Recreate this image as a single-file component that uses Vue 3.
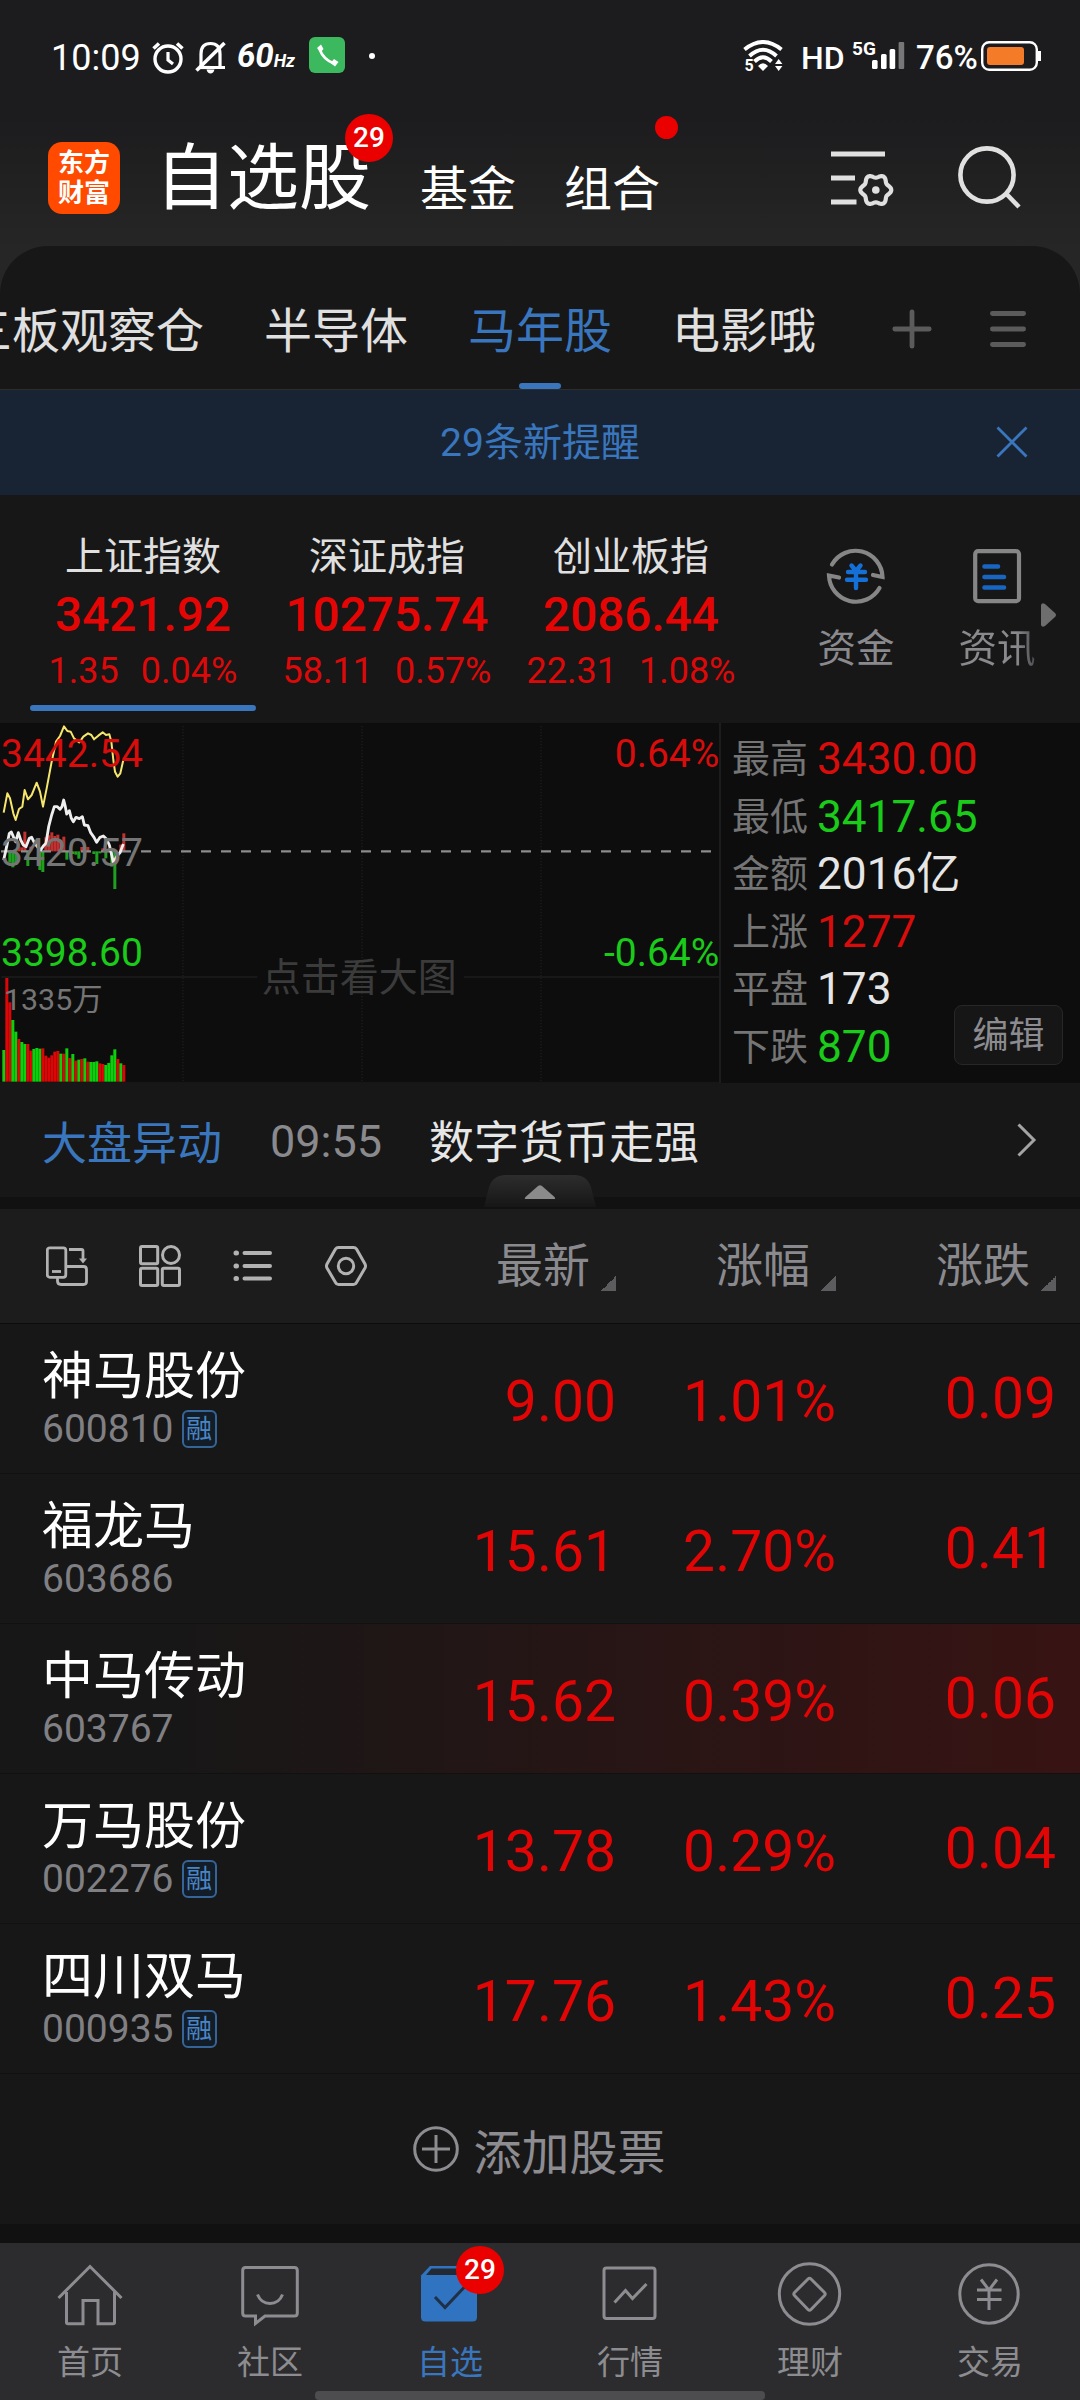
<script setup>
const tabs = ['三板观察仓', '半导体', '马年股', '电影哦']
const indices = [
  { name: '上证指数', price: '3421.92', diff: '1.35', pct: '0.04%', active: true },
  { name: '深证成指', price: '10275.74', diff: '58.11', pct: '0.57%' },
  { name: '创业板指', price: '2086.44', diff: '22.31', pct: '1.08%' },
]
const stats = [
  { label: '最高', value: '3430.00', tone: 'up' },
  { label: '最低', value: '3417.65', tone: 'down' },
  { label: '金额', value: '2016亿', tone: 'flat' },
  { label: '上涨', value: '1277', tone: 'up' },
  { label: '平盘', value: '173', tone: 'flat' },
  { label: '下跌', value: '870', tone: 'down' },
]
const columns = ['最新', '涨幅', '涨跌']
const stocks = [
  { name: '神马股份', code: '600810', margin: true, last: '9.00', pct: '1.01%', diff: '0.09' },
  { name: '福龙马', code: '603686', margin: false, last: '15.61', pct: '2.70%', diff: '0.41' },
  { name: '中马传动', code: '603767', margin: false, last: '15.62', pct: '0.39%', diff: '0.06', flash: true },
  { name: '万马股份', code: '002276', margin: true, last: '13.78', pct: '0.29%', diff: '0.04' },
  { name: '四川双马', code: '000935', margin: true, last: '17.76', pct: '1.43%', diff: '0.25' },
]

// Volume bars: colour flag and top edge, in chart units
const volume = [
  ['g', 1020], ['r', 804], ['r', 877], ['g', 930], ['g', 965], ['r', 987], ['g', 996], ['g', 1002],
  ['r', 1002], ['r', 1022], ['g', 1017], ['g', 1014], ['g', 1016], ['r', 1015], ['r', 1037], ['r', 1043],
  ['r', 1036], ['r', 1025], ['r', 1023], ['g', 1031], ['r', 1031], ['g', 1015], ['r', 1044], ['g', 1032],
  ['r', 1052], ['g', 1049], ['r', 1047], ['g', 1045], ['r', 1055], ['g', 1056], ['g', 1056], ['g', 1054],
  ['r', 1060], ['r', 1062], ['g', 1065], ['g', 1059], ['g', 1036], ['g', 1018], ['r', 1047], ['g', 1060], ['r', 1065],
]
// Momentum bars around the previous close: slot and far edge
const momentum = [
  [2, 458], [3, 472], [4, 465], [5, 410], [6, 412], [7, 365], [8, 468], [9, 410], [12, 480], [13, 486],
  [14, 382], [15, 376], [16, 367], [17, 378], [18, 374], [19, 392], [20, 380], [21, 449], [23, 432], [24, 434], [25, 446],
  [26, 411], [27, 411], [28, 411], [30, 432], [31, 462], [32, 430], [33, 415], [34, 445], [36, 470], [37, 537],
  [39, 404], [40, 370],
]
const avgLine = '11,308 22,250 30,265 40,310 47,330 57,297 67,290 74,240 84,268 95,255 110,218 120,245 129,290 140,235 155,155 168,95 180,78 192,49 202,63 212,65 222,85 238,97 250,80 264,70 274,75 282,88 295,77 308,67 318,75 328,73 334,95 340,150 345,185 353,200 361,190 370,150'
const priceLine = '11,450 20,410 28,370 34,366 40,380 47,395 55,368 62,390 70,405 78,410 88,385 95,382 103,398 112,410 122,420 130,408 138,400 146,350 155,315 163,290 172,290 180,298 186,290 191,270 196,290 200,312 208,302 214,325 220,335 228,322 238,326 247,320 253,345 264,347 272,368 282,382 290,397 300,382 310,378 320,388 328,405 334,430 340,458 350,440 360,428 370,402'

const gear = Array.from({ length: 72 }, (_, i) => {
  const a = (i * Math.PI) / 36
  const r = 13.9 + 1.6 * Math.cos(6 * a)
  return `${(47.8 + r * Math.cos(a)).toFixed(2)},${(41 + r * Math.sin(a)).toFixed(2)}`
}).join(' ')
</script>

<template>
  <div class="app">
    <div class="status">
      <span class="time">10:09</span>
      <svg class="alarm" width="32" height="32" viewBox="0 0 32 32" fill="none" stroke="#fff">
        <circle cx="16" cy="17" r="13" stroke-width="3.4" />
        <path d="M16 10v8l5 4" stroke-width="3.2" />
        <path d="M1.5 6.500L7 1.500M25 1.500L30.500 6.500" stroke-width="3.600" />
      </svg>
      <svg class="bell" width="32" height="34" viewBox="0 0 32 34" fill="none" stroke="#fff" stroke-width="3.2">
        <path d="M6 25V13Q6 2.500 15.500 2.500Q25 2.500 25 13V26.500M14 26.500H30" />
        <path d="M1.500 29.500L29.500 2" stroke-width="3.600" />
        <path d="M5 26.500H15" />
        <path d="M11.500 28.500h8q-1 4-4 4t-4-4z" fill="#fff" stroke="none" />
      </svg>
      <span class="hz">60<small>Hz</small></span>
      <svg class="phone" width="36" height="36" viewBox="0 0 36 36">
        <rect width="36" height="36" rx="6" fill="#3cb95f" />
        <path d="M10.500 12C13 19 17 23.500 25 26.500" fill="none" stroke="#fff" stroke-width="2.600" />
        <path d="M8 11l4-3.500 2.500 4.500-3 3.500zM21.500 26l3.500-4 4.500 3-3.500 4.500z" fill="#fff" />
      </svg>
      <i class="pip"></i>

      <svg class="wifi" width="40" height="32" viewBox="0 0 40 32" fill="none" stroke="#fff" stroke-width="3.900">
        <path d="M1.500 9.500Q20 -5.500 38.500 9.500" />
        <path d="M6.500 16Q20 3.500 33.500 16" />
        <path d="M11.500 21.500Q20 13 28.500 21.500" />
        <path d="M15 26Q20 20.500 25 26L20 31z" fill="#fff" stroke="none" />
        <path d="M32 24l3.700-5 3.700 5zM32 26l3.700 5 3.700-5z" fill="#fff" stroke="none" />
        <text x="1.500" y="31" font-size="16" font-weight="700" fill="#fff" stroke="none">5</text>
      </svg>
      <span class="hd">HD</span>
      <span class="gen">5G</span>
      <svg class="signal" width="33" height="28" viewBox="0 0 33 28" fill="#fff">
        <rect x="0" y="18" width="5.600" height="9" rx="1.500" />
        <rect x="9" y="12" width="5.600" height="15" rx="1.500" />
        <rect x="17.600" y="7" width="5.600" height="20" rx="1.500" />
        <rect x="26.600" y="0" width="5.600" height="27" rx="1" fill="#777" />
      </svg>
      <span class="charge">76%</span>
      <svg class="battery" width="60" height="30" viewBox="0 0 60 30">
        <rect x="1.200" y="1.200" width="54.600" height="27.600" rx="7" fill="none" stroke="#fff" stroke-width="2.400" />
        <rect x="6" y="6" width="37" height="18" rx="3" fill="#f47b28" />
        <rect x="57" y="10" width="3" height="10" fill="#fff" />
      </svg>
    </div>

    <header class="head">
      <div class="logo"><span>东方</span><span>财富</span></div>
      <div class="title">自选股<b class="badge">29</b></div>
      <div class="sub">基金</div>
      <div class="sub">组合<i class="reddot"></i></div>
      <div class="head-icons">
        <svg width="68" height="64" viewBox="0 0 68 64" fill="none" stroke="#e0e0e0">
          <path d="M3 5H57M3 29H27M3 53H28.500" stroke-width="5" />
          <polygon :points="gear" stroke-width="4.200" stroke-linejoin="round" />
          <circle cx="47.800" cy="41" r="3.800" fill="#e0e0e0" stroke="none" />
        </svg>
        <svg width="66" height="66" viewBox="0 0 66 66" fill="none" stroke="#e0e0e0" stroke-width="4.600">
          <circle cx="31" cy="30" r="26.600" />
          <path d="M50 48.500L63 62" />
        </svg>
      </div>
    </header>

    <main class="panel">
      <nav class="tabs">
        <div class="tab-clip">
          <span v-for="(t, i) in tabs" :key="t" class="tab" :class="{ on: i === 2 }">{{ t }}</span>
        </div>
        <svg class="plus" width="40" height="40" viewBox="0 0 40 40" stroke="#5b5b5b" stroke-width="4.800" stroke-linecap="round">
          <path d="M20 2.800V37.200M2.800 20H37.200" />
        </svg>
        <svg class="burger" width="36" height="40" viewBox="0 0 36 40" stroke="#5b5b5b" stroke-width="4.800" stroke-linecap="round">
          <path d="M2.400 4.500H33.600M2.400 20H33.600M2.400 35.500H33.600" />
        </svg>
      </nav>

      <div class="notice">
        <span>29条新提醒</span>
        <svg width="32" height="32" viewBox="0 0 32 32" stroke="#3a76bd" stroke-width="2.800">
          <path d="M1.500 1.500L30.500 30.500M30.500 1.500L1.500 30.500" />
        </svg>
      </div>

      <section class="indices">
        <div v-for="x in indices" :key="x.name" class="index" :class="{ on: x.active }">
          <div class="iname">{{ x.name }}</div>
          <div class="iprice">{{ x.price }}</div>
          <div class="idelta"><span>{{ x.diff }}</span><span>{{ x.pct }}</span></div>
        </div>
        <div class="tool">
          <svg width="60" height="62" viewBox="0 0 60 62" fill="none" stroke="#868686" stroke-width="4.200" stroke-linecap="round">
            <path d="M6 19.500A27 27 0 0 1 56.500 32L47 30" />
            <path d="M53.500 43A27 27 0 0 1 3 30.500L13 32.500" />
            <path d="M25.500 20.500L30 26L34.500 20.500M22 27H39M21 34.800H40M30 26V43" stroke="#146fd6" stroke-width="4.400" />
          </svg>
          <span>资金</span>
        </div>
        <div class="tool last">
          <svg width="60" height="62" viewBox="0 0 60 62" fill="none" stroke="#868686" stroke-width="4.200" stroke-linecap="round">
            <rect x="8.200" y="6.200" width="43.800" height="50" rx="3" />
            <path d="M17.500 21.500H31M17.500 32H37M17.500 42.500H37" stroke="#1766c4" stroke-width="4.600" />
          </svg>
          <span class="fade">资讯</span>
        </div>
        <svg class="more" width="15" height="24" viewBox="0 0 15 24"><path d="M0 2Q1 -1 4 1L14 10Q16 12 14 14L4 23Q1 25 0 22z" fill="#6e6e6e" /></svg>
      </section>

      <section class="market">
        <svg class="chart" width="719" height="360" viewBox="0 39 2157 1080">
          <g stroke="#1c1c1c" stroke-width="4">
            <path d="M549 48V1113M1086 48V1113M1623 48V1113" stroke="#1a1a1a" stroke-width="5" stroke-dasharray="4 5" />
            <path d="M4 801H772M1392 801H2157" stroke-width="5" />
            <path d="M0 1117H2157" stroke="#161616" />
          </g>
          <g>
            <rect v-for="m in momentum" :key="m[0]" :x="7 + m[0] * 9" width="9" :y="Math.min(m[1], 424)" :height="Math.abs(m[1] - 424)" :fill="m[1] > 424 ? '#20a020' : '#c23030'" />
          </g>
          <path d="M3 424H2142" stroke="#8c8c8c" stroke-width="7" stroke-dasharray="30 30" />
          <polyline :points="avgLine" fill="none" stroke="#f6e66c" stroke-width="6" stroke-linejoin="round" />
          <polyline :points="priceLine" fill="none" stroke="#eee" stroke-width="8.500" stroke-linejoin="round" />
          <g>
            <rect v-for="(v, i) in volume" :key="i" :x="7 + i * 9" width="9" :y="v[1]" :height="1115 - v[1]" :fill="v[0] === 'r' ? '#dc0606' : '#0cd00c'" />
          </g>
          <g font-size="117">
            <text x="3" y="171" fill="#d90c0c">3442.54</text>
            <text x="3" y="468" fill="#757575">3420.57</text>
            <text x="3" y="769" fill="#1acb1a">3398.60</text>
            <text x="2158" y="171" fill="#d90c0c" text-anchor="end">0.64%</text>
            <text x="2158" y="769" fill="#1acb1a" text-anchor="end">-0.64%</text>
            <text x="12" y="900" fill="#757575" font-size="91">1335万</text>
            <text x="1078" y="842" fill="#3b3b3b" text-anchor="middle">点击看大图</text>
          </g>
        </svg>
        <div class="stats">
          <div v-for="s in stats" :key="s.label" class="stat">
            <span class="slabel">{{ s.label }}</span><span class="sval" :class="s.tone">{{ s.value }}</span>
          </div>
          <button class="edit">编辑</button>
        </div>
      </section>

      <section class="news">
        <span class="ntag">大盘异动</span><span class="ntime">09:55</span><span class="ntext">数字货币走强</span>
        <svg class="chev" width="20" height="34" viewBox="0 0 20 34" fill="none" stroke="#a4a4a4" stroke-width="3"><path d="M1.500 1.500L17 17L1.500 32.500" /></svg>
        <svg class="handle" width="112" height="32" viewBox="0 0 112 32">
          <defs><linearGradient id="hg" x1="0" y1="0" x2="0" y2="1"><stop offset="0" stop-color="#2d2d2d" /><stop offset="1" stop-color="#161616" /></linearGradient></defs>
          <path d="M0 32L4 16Q7 0 22 0H90Q105 0 108 16L112 32z" fill="url(#hg)" />
          <path d="M41.500 24Q40 24 41.500 22L54 11Q56 9.500 58 11L70.500 22Q72 24 70 24z" fill="#8b8b8b" />
        </svg>
      </section>

      <div class="gap1"></div>

      <section class="thead">
        <div class="views">
          <svg width="42" height="42" viewBox="0 0 42 42" fill="none" stroke="#b2b2b2" stroke-width="2.800" stroke-linejoin="round">
            <rect x="1.300" y="2.800" width="18.500" height="29.500" rx="2.500" /><path d="M6 26.500H15" />
            <path d="M11.500 33V36Q11.500 39.500 15 39.500H37.500Q40.500 39.500 40.500 36.500V24.500Q40.500 21.500 37.500 21.500H20" />
            <path d="M23 4.500H35.500Q37 4.500 37 6V14" /><path d="M33 13.500H41L37 18.500z" fill="#b2b2b2" stroke="none" />
          </svg>
          <svg width="42" height="42" viewBox="0 0 42 42" fill="none" stroke="#b2b2b2" stroke-width="3">
            <rect x="1.500" y="1.500" width="17.200" height="17.200" rx="1.500" /><circle cx="32" cy="10" r="8.500" />
            <rect x="1.500" y="23.300" width="17.200" height="17.200" rx="1.500" /><rect x="23.300" y="23.300" width="17.200" height="17.200" rx="1.500" />
          </svg>
          <svg width="42" height="42" viewBox="0 0 42 42" fill="none" stroke="#b2b2b2" stroke-width="4" stroke-linecap="round">
            <path d="M12.500 8H38M12.500 21H38M12.500 33.500H38" />
            <path d="M4 8h.5M4 21h.5M4 33.500h.5" stroke-width="5" />
          </svg>
          <svg width="42" height="42" viewBox="0 0 42 42" fill="none" stroke="#b2b2b2" stroke-width="3" stroke-linejoin="round">
            <path d="M13.500 2.500H28.500Q30.500 2.500 31.500 4L40 19Q41 21 40 23L31.500 37.500Q30.500 39.500 28.500 39.500H13.500Q11.500 39.500 10.500 37.500L2 23Q1 21 2 19L10.500 4Q11.500 2.500 13.500 2.500z" />
            <circle cx="21" cy="21" r="7.700" />
          </svg>
        </div>
        <div v-for="c in columns" :key="c" class="th">{{ c }}<i></i></div>
      </section>

      <section>
        <div v-for="s in stocks" :key="s.code" class="row" :class="{ flash: s.flash }">
          <div class="who">
            <div class="sname">{{ s.name }}</div>
            <div class="scode">{{ s.code }}<em v-if="s.margin">融</em></div>
          </div>
          <div class="num">{{ s.last }}</div>
          <div class="num">{{ s.pct }}</div>
          <div class="num diff">{{ s.diff }}</div>
        </div>
      </section>

      <div class="add">
        <svg width="46" height="46" viewBox="0 0 46 46" fill="none" stroke="#8c8c91" stroke-width="3"><circle cx="23" cy="23" r="21.300" /><path d="M9 23H37M23 9V37" /></svg>
        <span>添加股票</span>
      </div>
      <div class="gap2"></div>
    </main>

    <footer class="nav">
      <div class="item">
        <svg width="66" height="66" viewBox="0 0 66 66"><path d="M1.500 37L33 5.500L64.500 37M9.500 31V61.500Q9.500 62.700 11 62.700H26V39.500H41V62.700H56Q57.500 62.700 57.500 61.500V31" /></svg>
        <span>首页</span>
      </div>
      <div class="item">
        <svg width="66" height="66" viewBox="0 0 66 66"><path d="M8.500 6.500H57.500Q60.300 6.500 60.300 9.500V52Q60.300 55 57.500 55H28L18.500 62.500V55H8.500Q5.700 55 5.700 52V9.500Q5.700 6.500 8.500 6.500z" /><path d="M20.500 33.500Q24 42.500 33 42.500Q42 42.500 45.500 33.500" /></svg>
        <span>社区</span>
      </div>
      <div class="item on">
        <svg width="66" height="66" viewBox="0 0 66 66">
          <path d="M4 14.500L13 5H52L60 14.500V56Q60 60.500 55.500 60.500H8.500Q4 60.500 4 56z" fill="#3073c0" stroke="none" />
          <path d="M9 14L14.500 7.500H51L56.500 14z" fill="#232a33" stroke="none" />
          <path d="M18 36L28 46.500L47.500 26" stroke="#1f3048" stroke-width="3" />
        </svg>
        <span>自选</span>
        <b class="badge">29</b>
      </div>
      <div class="item">
        <svg width="66" height="66" viewBox="0 0 66 66"><rect x="7" y="7" width="51" height="50.500" rx="2.500" /><path d="M17.500 41.500L28.500 29.500L35.500 37.500L49.500 23" /></svg>
        <span>行情</span>
      </div>
      <div class="item">
        <svg width="66" height="66" viewBox="0 0 66 66"><circle cx="32.500" cy="33" r="30.200" /><path d="M31 18Q32.500 16.500 34 18L47.500 31.500Q49 33 47.500 34.500L34 48.500Q32.500 50 31 48.500L17.500 34.500Q16 33 17.500 31.500z" /></svg>
        <span>理财</span>
      </div>
      <div class="item">
        <svg width="66" height="66" viewBox="0 0 66 66"><circle cx="32" cy="33" r="29.200" /><path d="M24 18.500L32 29L40 18.500M20 29H44.500M20 38.500H44.500M32 29V49" /></svg>
        <span>交易</span>
      </div>
      <i class="homebar"></i>
    </footer>
  </div>
</template>

<style>
body { background: #171717; }
</style>

<style scoped>
.app {
  width: 1080px;
  height: 2400px;
  overflow: hidden;
  font-family: Roboto, "Noto Sans CJK SC", sans-serif;
  color: #e0e0e0;
  background: linear-gradient(#1c1c1e 115px, #262626 250px);
}
.app * { box-sizing: border-box; }
svg { display: block; flex: none; }
svg text { font-family: Roboto, "Noto Sans CJK SC", sans-serif; }
i, em { font-style: normal; }

.status { display: flex; height: 115px; align-items: center; padding: 0 39px 0 51px; color: #fff; line-height: 40px; white-space: nowrap; }
.time { width: 101px; font-size: 36px; }
.bell { margin-left: 11px; }
.hz { width: 56px; margin: 2px 0 0 10px; font-size: 33px; font-weight: 700; font-style: italic; }
.hz small { font-size: 18px; }
.phone { margin: -5px 0 0 16px; }
.pip { width: 6px; height: 6px; margin: -4px 0 0 24px; border-radius: 50%; background: #fff; }
.wifi { margin: -3px 18px 0 auto; }
.hd { width: 51px; font-size: 32px; font-weight: 500; }
.gen { width: 20px; margin-top: -17px; font-size: 19px; font-weight: 700; }
.signal { margin-top: -3px; }
.charge { width: 65px; margin-left: 11px; font-size: 33px; font-weight: 500; }
.battery { margin: -4px 0 0 0; }

.head { display: flex; height: 131px; align-items: flex-start; padding: 0 58px 0 48px; color: #fff; }
.logo { display: flex; flex-direction: column; width: 72px; height: 72px; margin-top: 27px; padding-top: 6px; border-radius: 14px; background: #ff4a00; align-items: center; font-size: 26px; font-weight: 700; line-height: 30px; }
.title { position: relative; margin: 28px 0 0 35px; font-size: 72px; line-height: 72px; }
.sub { position: relative; margin: 51px 0 0 48px; font-size: 48px; line-height: 48px; }
.title + .sub { margin-left: 49px; }
.badge { position: absolute; width: 48px; height: 48px; border-radius: 50%; background: #eb0000; color: #fff; font-size: 28px; font-weight: 500; line-height: 48px; text-align: center; }
.title .badge { left: 190px; top: -29px; }
.reddot { position: absolute; left: 91px; top: -50px; width: 23px; height: 23px; border-radius: 50%; background: #eb0000; }
.head-icons { display: flex; gap: 60px; margin: 34px 0 0 auto; }
.head-icons svg:last-child { margin-top: -4px; }

.panel { border-radius: 48px 48px 0 0; background: #171717; overflow: hidden; }
.tabs { display: flex; height: 144px; border-bottom: 1px solid #2b2d2e; }
.tab-clip { display: flex; width: 851px; gap: 60px; margin-left: -36px; font-size: 48px; line-height: 48px; padding-top: 62px; white-space: nowrap; }
.tab { display: flex; flex: none; flex-direction: column; align-items: center; }
.tab.on { color: #3a76bd; }
.tab.on::after { content: ""; width: 42px; height: 6px; margin-top: 27px; border-radius: 3px; background: #3a76bd; }
.plus { margin: 63px 0 0 77px; }
.burger { margin: 63px 0 0 58px; }

.notice { display: flex; height: 105px; align-items: center; padding-right: 52px; background: #182433; color: #3a76bd; font-size: 39px; line-height: 104px; }
.notice span { flex: 1; padding: 1px 0 0 84px; text-align: center; }
.notice svg { margin-top: -1px; }

.indices { display: flex; height: 228px; padding-left: 21px; }
.index { display: flex; flex-direction: column; align-items: center; width: 244px; height: 222px; }
.index.on::after { content: ""; width: 226px; height: 6px; margin-top: 14px; border-radius: 3px; background: #3a76bd; }
.iname { margin-top: 42px; font-size: 39px; line-height: 40px; }
.iprice { margin-top: 14px; font-size: 47.700px; font-weight: 500; line-height: 48px; color: #e60505; }
.idelta { display: flex; gap: 22px; margin-top: 12px; font-size: 36px; line-height: 40px; color: #db0909; }
.tool { display: flex; flex-direction: column; align-items: center; width: 100px; margin: 50px 0 0 53px; font-size: 38.500px; line-height: 40px; color: #8a8a8e; }
.tool.last { margin-left: 41px; }
.tool span { margin-top: 22px; }
.fade { background: linear-gradient(90deg, #8a8a8e 75%, #4b4b4f); background-clip: text; color: transparent; }
.more { margin: 108px 0 0 -6px; }

.market { display: flex; height: 360px; background: #0d0d0d; }
.stats { position: relative; width: 361px; padding: 8px 0 0 11px; border-left: 2px solid #1c1c1c; }
.stat { display: flex; height: 57.500px; align-items: center; line-height: 57px; }
.slabel { width: 85px; font-size: 38px; color: #757575; }
.sval { font-size: 44.200px; }
.up { color: #d90c0c; }
.down { color: #1acb1a; }
.flat { color: #e6e6e6; }
.edit { position: absolute; left: 233px; top: 282px; width: 109px; height: 60px; padding: 2px 0 0; border: 1px solid #272727; border-radius: 8px; background: #161616; color: #8c8c90; font: 36px/56px Roboto, "Noto Sans CJK SC", sans-serif; }

.news { position: relative; display: flex; height: 114px; padding: 0 43px 0 42px; font-size: 45px; line-height: 120px; }
.ntag { width: 228px; padding-top: 2px; color: #3a76bd; }
.ntime { width: 159px; margin-top: -1px; color: #8a8a8e; }
.ntext { padding-top: 1px; color: #e6e6e6; }
.chev { margin: 40px 0 0 auto; }
.handle { position: absolute; left: 484px; top: 92px; }
.gap1 { height: 12px; background: #111; }

.thead { display: flex; height: 115px; padding-right: 24px; border-bottom: 1px solid #0c0c0c; background: #1c1c1c; }
.views { display: flex; flex: 1; gap: 51px; padding: 36px 0 0 46px; }
.th { display: flex; width: 220px; justify-content: flex-end; font-size: 47px; line-height: 114px; color: #8a8a8e; white-space: nowrap; }
.views + .th { width: 170px; }
.th i { width: 15px; height: 15px; margin: 67px 0 0 11px; background: linear-gradient(135deg, transparent 50%, #5c5c5e 50%); }

.row { display: flex; height: 150px; padding: 0 24px 0 42px; border-bottom: 1px solid #111; }
.row.flash { background: linear-gradient(90deg, #171717 14%, #381313); }
.who { width: 354px; padding-top: 26px; }
.sname { font-size: 51px; line-height: 54px; color: #fff; }
.scode { display: flex; align-items: center; margin-top: 5px; font-size: 39px; line-height: 40px; color: #808084; }
.scode em { width: 35px; height: 38px; margin-left: 8px; border: 2px solid #356597; border-radius: 6px; background: #131d28; color: #4a86c6; font-size: 26px; line-height: 34px; text-align: center; }
.num { width: 220px; text-align: right; font-size: 57px; line-height: 156px; color: #e20505; }
.num.diff { line-height: 149px; }

.add { display: flex; height: 150px; align-items: center; justify-content: center; gap: 15px; font-size: 48px; line-height: 48px; color: #8c8c91; }
.add svg { margin-top: -1px; }
.add span { margin: 10px 1px 0 -1px; }
.gap2 { height: 19px; background: #111; }

.nav { position: relative; display: flex; height: 157px; background: #2c2c2e; }
.item { position: relative; display: flex; width: 180px; flex-direction: column; align-items: center; padding-top: 18px; font-size: 33px; line-height: 34px; color: #8c8c91; }
.item svg { fill: none; stroke: #8c8c91; stroke-width: 3; }
.item span { margin-top: 19px; }
.item.on { color: #3a76bd; }
.item .badge { left: 96px; top: 3px; }
.homebar { position: absolute; left: 315px; bottom: 0; width: 450px; height: 9px; border-radius: 4px; background: #4d4d50; }
</style>
